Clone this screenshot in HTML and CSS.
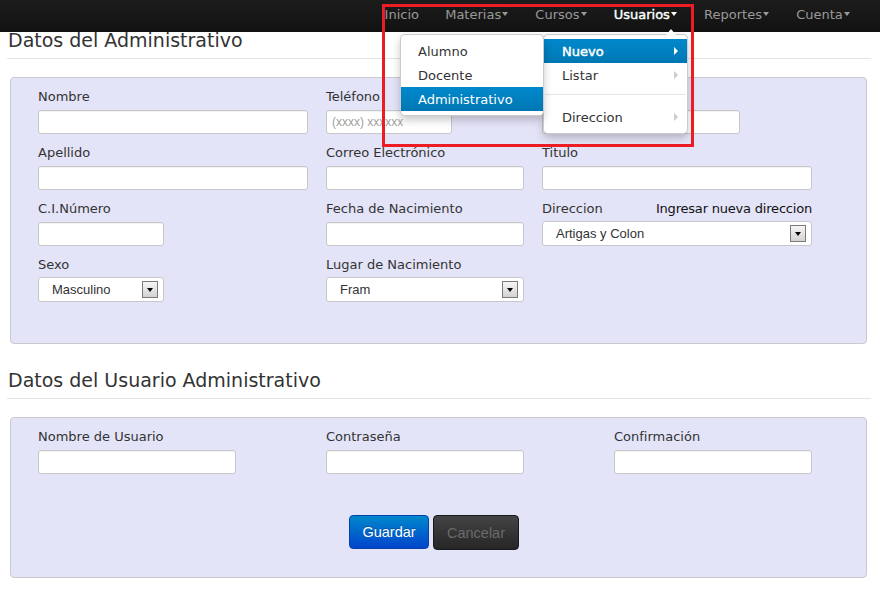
FILE: index.html
```html
<!DOCTYPE html>
<html lang="es">
<head>
<meta charset="utf-8">
<title>Datos del Administrativo</title>
<link rel="stylesheet" href="styles.css">
</head>
<body>
<header class="navbar">
  <ul class="nav">
    <li class="nav-item first">Inicio</li>
    <li class="nav-item">Materias<span class="caret"></span></li>
    <li class="nav-item">Cursos<span class="caret"></span></li>
    <li class="nav-item active">Usuarios<span class="caret"></span></li>
    <li class="nav-item">Reportes<span class="caret"></span></li>
    <li class="nav-item">Cuenta<span class="caret"></span></li>
  </ul>
</header>

<main class="page">
  <h2 class="title">Datos del Administrativo</h2>
  <div class="rule"></div>
  <section class="panel">
    <div class="grid grid-a">
      <div class="field"><label class="lbl">Nombre</label><input class="inp w270" type="text"></div>
      <div class="field"><label class="lbl">Teléfono</label><input class="inp w126" type="text" placeholder="(xxxx) xxxxxx"></div>
      <div class="field"><label class="lbl">&nbsp;</label><input class="inp w198" type="text"></div>

      <div class="field"><label class="lbl">Apellido</label><input class="inp w270" type="text"></div>
      <div class="field"><label class="lbl">Correo Electrónico</label><input class="inp w198" type="text"></div>
      <div class="field"><label class="lbl">Titulo</label><input class="inp w270" type="text"></div>

      <div class="field"><label class="lbl">C.I.Número</label><input class="inp w126" type="text"></div>
      <div class="field"><label class="lbl">Fecha de Nacimiento</label><input class="inp w198" type="text"></div>
      <div class="field">
        <div class="lbl-row w270"><label class="lbl">Direccion</label><span class="link">Ingresar nueva direccion</span></div>
        <div class="sel w270"><span class="sel-text">Artigas y Colon</span><span class="sel-btn"><span class="tri"></span></span></div>
      </div>

      <div class="field"><label class="lbl">Sexo</label><div class="sel w126"><span class="sel-text">Masculino</span><span class="sel-btn"><span class="tri"></span></span></div></div>
      <div class="field"><label class="lbl">Lugar de Nacimiento</label><div class="sel w198"><span class="sel-text">Fram</span><span class="sel-btn"><span class="tri"></span></span></div></div>
    </div>
  </section>

  <h2 class="title title-2">Datos del Usuario Administrativo</h2>
  <div class="rule"></div>
  <section class="panel panel-b">
    <div class="grid grid-b">
      <div class="field"><label class="lbl">Nombre de Usuario</label><input class="inp w198" type="text"></div>
      <div class="field"><label class="lbl">Contraseña</label><input class="inp w198" type="password"></div>
      <div class="field"><label class="lbl">Confirmación</label><input class="inp w198" type="password"></div>
    </div>
    <div class="actions">
      <button class="btn btn-primary" type="button">Guardar</button>
      <button class="btn btn-inverse" type="button">Cancelar</button>
    </div>
  </section>
</main>

<div class="menu menu-main">
  <span class="notch"></span>
  <div class="menu-item active bold">Nuevo<span class="sub-arrow"></span></div>
  <div class="menu-item">Listar<span class="sub-arrow"></span></div>
  <div class="divider"></div>
  <div class="menu-item">Direccion<span class="sub-arrow"></span></div>
</div>

<div class="menu menu-sub">
  <div class="menu-item">Alumno</div>
  <div class="menu-item">Docente</div>
  <div class="menu-item active">Administrativo</div>
</div>

<div class="callout"></div>
</body>
</html>
```

FILE: styles.css
```css
* { box-sizing: border-box; }

body {
  margin: 0;
  background: #fff;
  font-family: "DejaVu Sans", Verdana, sans-serif;
  color: #333;
}

/* navbar */
.navbar {
  height: 32px;
  background: linear-gradient(#1c1c1c, #121212);
}
.nav {
  list-style: none;
  margin: 0;
  padding: 0 0 0 370px;
  display: flex;
}
.nav-item {
  padding: 0 13.6px;
  height: 32px;
  line-height: 30px;
  font-size: 13px;
  color: #999;
  white-space: nowrap;
}
.nav-item.first {
  padding-left: 14.6px;
  padding-right: 12.6px;
}
.nav-item.active {
  color: #fff;
  -webkit-text-stroke: 0.4px #fff;
}
.caret {
  display: inline-block;
  width: 0;
  height: 0;
  vertical-align: top;
  margin-top: 12px;
  margin-left: 1px;
  border-top: 4px solid currentColor;
  border-left: 3.5px solid transparent;
  border-right: 3.5px solid transparent;
}

/* page */
.page {
  padding: 0 9px 0 7px;
}
.title {
  margin: 0;
  padding-left: 1px;
  font-size: 19px;
  line-height: 16px;
  font-weight: normal;
  color: #333;
}
.title-2 {
  margin-top: 28px;
}
.rule {
  height: 2px;
  margin: 10px 0 17px;
  border-top: 1px solid #e4e4e4;
  border-bottom: 1px solid #fff;
}
.panel {
  margin: 0 4px 0 3px;
  background: #e4e4f8;
  border: 1px solid #c9c9cf;
  border-radius: 4px;
  padding: 11px 0 41px 27px;
}
.panel-b {
  padding-bottom: 27px;
}
.grid {
  display: grid;
  grid-auto-rows: 45px;
  row-gap: 11px;
}
.grid-a { grid-template-columns: 288px 216px 1fr; }
.grid-b { grid-template-columns: 288px 288px 1fr; }

.field {
  display: flex;
  flex-direction: column;
  align-items: flex-start;
}
.lbl {
  display: block;
  height: 16px;
  line-height: 16px;
  font-size: 13px;
  color: #333;
  margin-bottom: 5px;
  white-space: nowrap;
}
.lbl-row {
  display: flex;
  justify-content: space-between;
  align-items: flex-start;
}
.link {
  font-size: 13px;
  line-height: 15px;
  letter-spacing: -0.2px;
  color: #111;
  white-space: nowrap;
}
.inp {
  display: block;
  height: 24px;
  margin: 0;
  padding: 0 5px;
  border: 1px solid #c8c8c8;
  border-radius: 3px;
  background: #fff;
  box-shadow: inset 0 1px 1px rgba(0,0,0,0.06);
  font-family: "Liberation Sans", Arial, sans-serif;
  font-size: 12px;
  color: #555;
  outline: none;
}
.inp::placeholder { color: #a0a0a0; }
.w270 { width: 270px; }
.w198 { width: 198px; }
.w126 { width: 126px; }

.sel {
  display: flex;
  align-items: center;
  height: 26px;
  margin-top: -1px;
  padding-left: 13px;
  border: 1px solid #c8c8c8;
  border-radius: 3px;
  background: #fff;
  font-family: "Liberation Sans", Arial, sans-serif;
  font-size: 13px;
  color: #333;
}
.sel-text { flex: 1; white-space: nowrap; }
.sel-btn {
  width: 16px;
  height: 17px;
  margin-right: 5px;
  border: 1px solid #7a7a7a;
  background: linear-gradient(#f6f6f6, #d2d2d2);
  display: flex;
  align-items: center;
  justify-content: center;
}
.tri {
  width: 0;
  height: 0;
  border-top: 4px solid #000;
  border-left: 3.5px solid transparent;
  border-right: 3.5px solid transparent;
}

.actions {
  display: flex;
  gap: 4px;
  margin-top: 41px;
  padding-left: 311px;
}
.btn {
  height: 34px;
  margin: 0;
  border-radius: 4px;
  font-family: "Liberation Sans", Arial, sans-serif;
  font-size: 14.5px;
  line-height: 20px;
  padding: 0;
}
.btn-primary {
  width: 80px;
  color: #fff;
  background: linear-gradient(#0088cc, #0044cc);
  border: 1px solid #0a3fa8;
  text-shadow: 0 -1px 0 rgba(0,0,0,0.25);
}
.btn-inverse {
  width: 86px;
  height: 35px;
  color: #6a6a6a;
  background: linear-gradient(#444, #262626);
  border: 1px solid #1a1a1a;
}

/* dropdown menus (overlays) */
.menu {
  position: absolute;
  background: #fff;
  border: 1px solid rgba(0,0,0,0.2);
  border-radius: 5px;
  box-shadow: 0 4px 9px rgba(0,0,0,0.22);
  padding: 4px 0;
  font-size: 13px;
  color: #333;
}
.menu-main {
  left: 543px;
  top: 34px;
  width: 145px;
  z-index: 2;
}
.menu-sub {
  left: 400px;
  top: 34px;
  width: 144px;
  z-index: 3;
}
.menu-item {
  position: relative;
  height: 24px;
  line-height: 25px;
  padding-left: 18px;
  white-space: nowrap;
}
.menu-sub .menu-item { padding-left: 17px; }
.menu-item.active {
  color: #fff;
  background: linear-gradient(#0088cc, #0077b3);
}
.menu-item.bold {
  -webkit-text-stroke: 0.45px #fff;
}
.sub-arrow {
  position: absolute;
  right: 9px;
  top: 8px;
  width: 0;
  height: 0;
  border-left: 4px solid #ccc;
  border-top: 4px solid transparent;
  border-bottom: 4px solid transparent;
}
.menu-item.active .sub-arrow { border-left-color: #fff; }
.divider {
  height: 2px;
  margin: 7px 1px 9px;
  border-top: 1px solid #e5e5e5;
  border-bottom: 1px solid #fff;
}
.notch {
  position: absolute;
  top: -6px;
  left: 122px;
  width: 0;
  height: 0;
  border-bottom: 6px solid #fff;
  border-left: 5px solid transparent;
  border-right: 5px solid transparent;
}

.callout {
  position: absolute;
  left: 382px;
  top: 4px;
  width: 312px;
  height: 143px;
  border: 3px solid #ec1c24;
  z-index: 5;
  pointer-events: none;
}
```
